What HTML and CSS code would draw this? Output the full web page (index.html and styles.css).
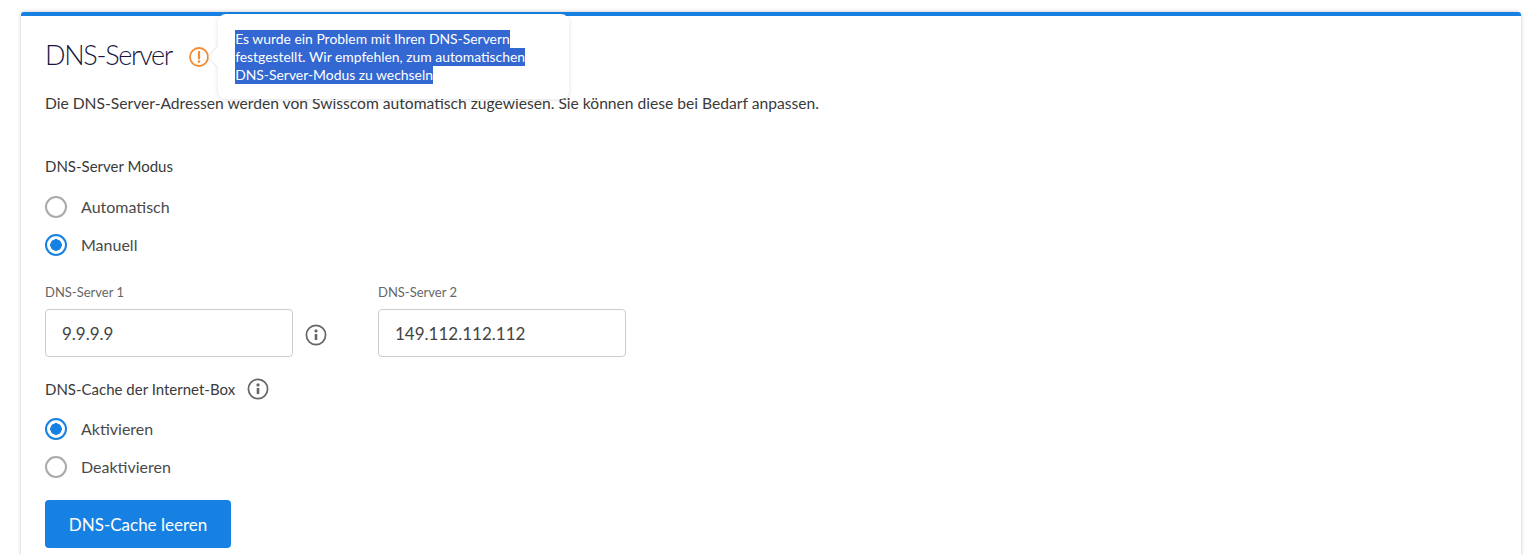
FILE: index.html
```html
<!DOCTYPE html>
<html lang="de">
<head>
  <meta charset="UTF-8">
  <meta name="viewport" content="width=device-width, initial-scale=1.0">
  <title>DNS-Server</title>
  <link rel="stylesheet" href="styles.css">
</head>
<body>
  <div class="card">
    <div class="title-row">
      <h2>DNS-Server</h2>
      <span class="warn-wrap">
        <svg class="warn-icon" width="22" height="22" viewBox="0 0 22 22" fill="none">
          <circle cx="11" cy="11" r="9" stroke="#f58b32" stroke-width="1.8"/>
          <path d="M11 5.8v6.6" stroke="#f58b32" stroke-width="2.2" stroke-linecap="round"/>
          <circle cx="11" cy="15.6" r="1.3" fill="#f58b32"/>
        </svg>
        <div class="tooltip">
          <span class="sel">Es wurde ein Problem mit Ihren DNS-Servern</span>
          <span class="sel">festgestellt. Wir empfehlen, zum automatischen</span>
          <span class="sel">DNS-Server-Modus zu wechseln</span>
        </div>
      </span>
    </div>
    <p class="intro">Die DNS-Server-Adressen werden von Swisscom automatisch zugewiesen. Sie können diese bei Bedarf anpassen.</p>

    <div class="section-label">DNS-Server Modus</div>
    <div class="radio-group">
      <label class="radio"><span class="dot"></span>Automatisch</label>
      <label class="radio"><span class="dot on"></span>Manuell</label>
    </div>

    <div class="fields">
      <div class="field">
        <div class="field-label">DNS-Server 1</div>
        <div class="input-row">
          <div class="input">9.9.9.9</div>
          <svg class="info" width="22" height="22" viewBox="0 0 22 22" fill="none">
            <circle cx="11" cy="11" r="9.6" stroke="#666" stroke-width="1.7"/>
            <circle cx="11" cy="6.9" r="1.6" fill="#666"/>
            <path d="M11 10v6" stroke="#666" stroke-width="2.6"/>
          </svg>
        </div>
      </div>
      <div class="field">
        <div class="field-label">DNS-Server 2</div>
        <div class="input">149.112.112.112</div>
      </div>
    </div>

    <div class="section-label cache-label">DNS-Cache der Internet-Box
      <svg class="info" width="22" height="22" viewBox="0 0 22 22" fill="none">
        <circle cx="11" cy="11" r="9.6" stroke="#666" stroke-width="1.7"/>
        <circle cx="11" cy="6.9" r="1.6" fill="#666"/>
        <path d="M11 10v6" stroke="#666" stroke-width="2.6"/>
      </svg>
    </div>
    <div class="radio-group cache-radios">
      <label class="radio"><span class="dot on"></span>Aktivieren</label>
      <label class="radio"><span class="dot"></span>Deaktivieren</label>
    </div>

    <button class="btn">DNS-Cache leeren</button>
  </div>
</body>
</html>
```
FILE: styles.css
```css
html, body {
  margin: 0;
  height: 555px;
  overflow: hidden;
  background: #fff;
}
body {
  font-family: "Lato", "Liberation Sans", sans-serif;
  color: #3a3a3a;
}
.card {
  margin: 12px 17px 0 21px;
  padding: 22px 24px 7px 24px;
  border-top: 4px solid #1781e3;
  border-radius: 3px 3px 0 0;
  box-shadow: 0 0 4px rgba(0, 0, 0, 0.22);
  background: #fff;
}
.title-row {
  display: flex;
  align-items: center;
  height: 32px;
}
h2 {
  margin: 0;
  font-size: 27px;
  font-weight: 300;
  letter-spacing: -1.3px;
  color: #15173f;
}
.warn-wrap {
  position: relative;
  display: flex;
  margin-left: 16px;
  margin-top: 6px;
}
.tooltip {
  position: absolute;
  left: 30px;
  top: -32px;
  width: 317px;
  height: 69px;
  padding: 16px 17px 0;
  background: #fff;
  border-radius: 8px;
  box-shadow: 0 1px 5px rgba(0, 0, 0, 0.12);
  font-size: 13.9px;
  line-height: 18px;
}
.tooltip::before {
  content: "";
  position: absolute;
  left: -7px;
  top: 36px;
  width: 14px;
  height: 14px;
  background: #fff;
  transform: rotate(45deg);
  box-shadow: -1px 1px 2px rgba(0, 0, 0, 0.08);
}
.sel {
  position: relative;
  display: block;
  width: fit-content;
  height: 18px;
  background: #3367d1;
  color: #fff;
  white-space: nowrap;
}
.intro {
  margin: 22px 0 0;
  font-size: 15.64px;
  line-height: 22px;
}
.section-label {
  margin-top: 41px;
  font-size: 15px;
  line-height: 22px;
}
.radio-group {
  display: flex;
  flex-direction: column;
  gap: 16px;
  margin-top: 18px;
}
.cache-radios {
  margin-top: 17px;
}
.radio {
  display: flex;
  align-items: center;
  gap: 14px;
  height: 22px;
  font-size: 16px;
  color: #4a4a4a;
}
.dot {
  box-sizing: border-box;
  width: 22px;
  height: 22px;
  margin-top: 2px;
  border: 2px solid #aaa;
  border-radius: 50%;
  background: #fff;
}
.dot.on {
  border-color: #1781e3;
  background: radial-gradient(circle, #1781e3 0 5.5px, #fff 6px);
}
.fields {
  display: flex;
  gap: 85px;
  margin-top: 28px;
}
.field-label {
  font-size: 13px;
  line-height: 18px;
  color: #666;
  margin-bottom: 8px;
}
.input-row {
  display: flex;
  align-items: center;
  gap: 12px;
}
.input-row .info {
  margin-top: 4px;
  margin-right: -34px;
}
.input {
  box-sizing: border-box;
  width: 248px;
  height: 48px;
  padding: 0 16px;
  border: 1px solid #ccc;
  border-radius: 4px;
  font-size: 17px;
  line-height: 48px;
  color: #444;
}
.cache-label {
  display: flex;
  align-items: center;
  gap: 12px;
  margin-top: 21px;
}
.btn {
  display: block;
  margin-top: 23px;
  width: 186px;
  height: 48px;
  border: 0;
  border-radius: 4px;
  background: #1781e3;
  color: #fff;
  font-family: inherit;
  font-size: 17px;
}
```
